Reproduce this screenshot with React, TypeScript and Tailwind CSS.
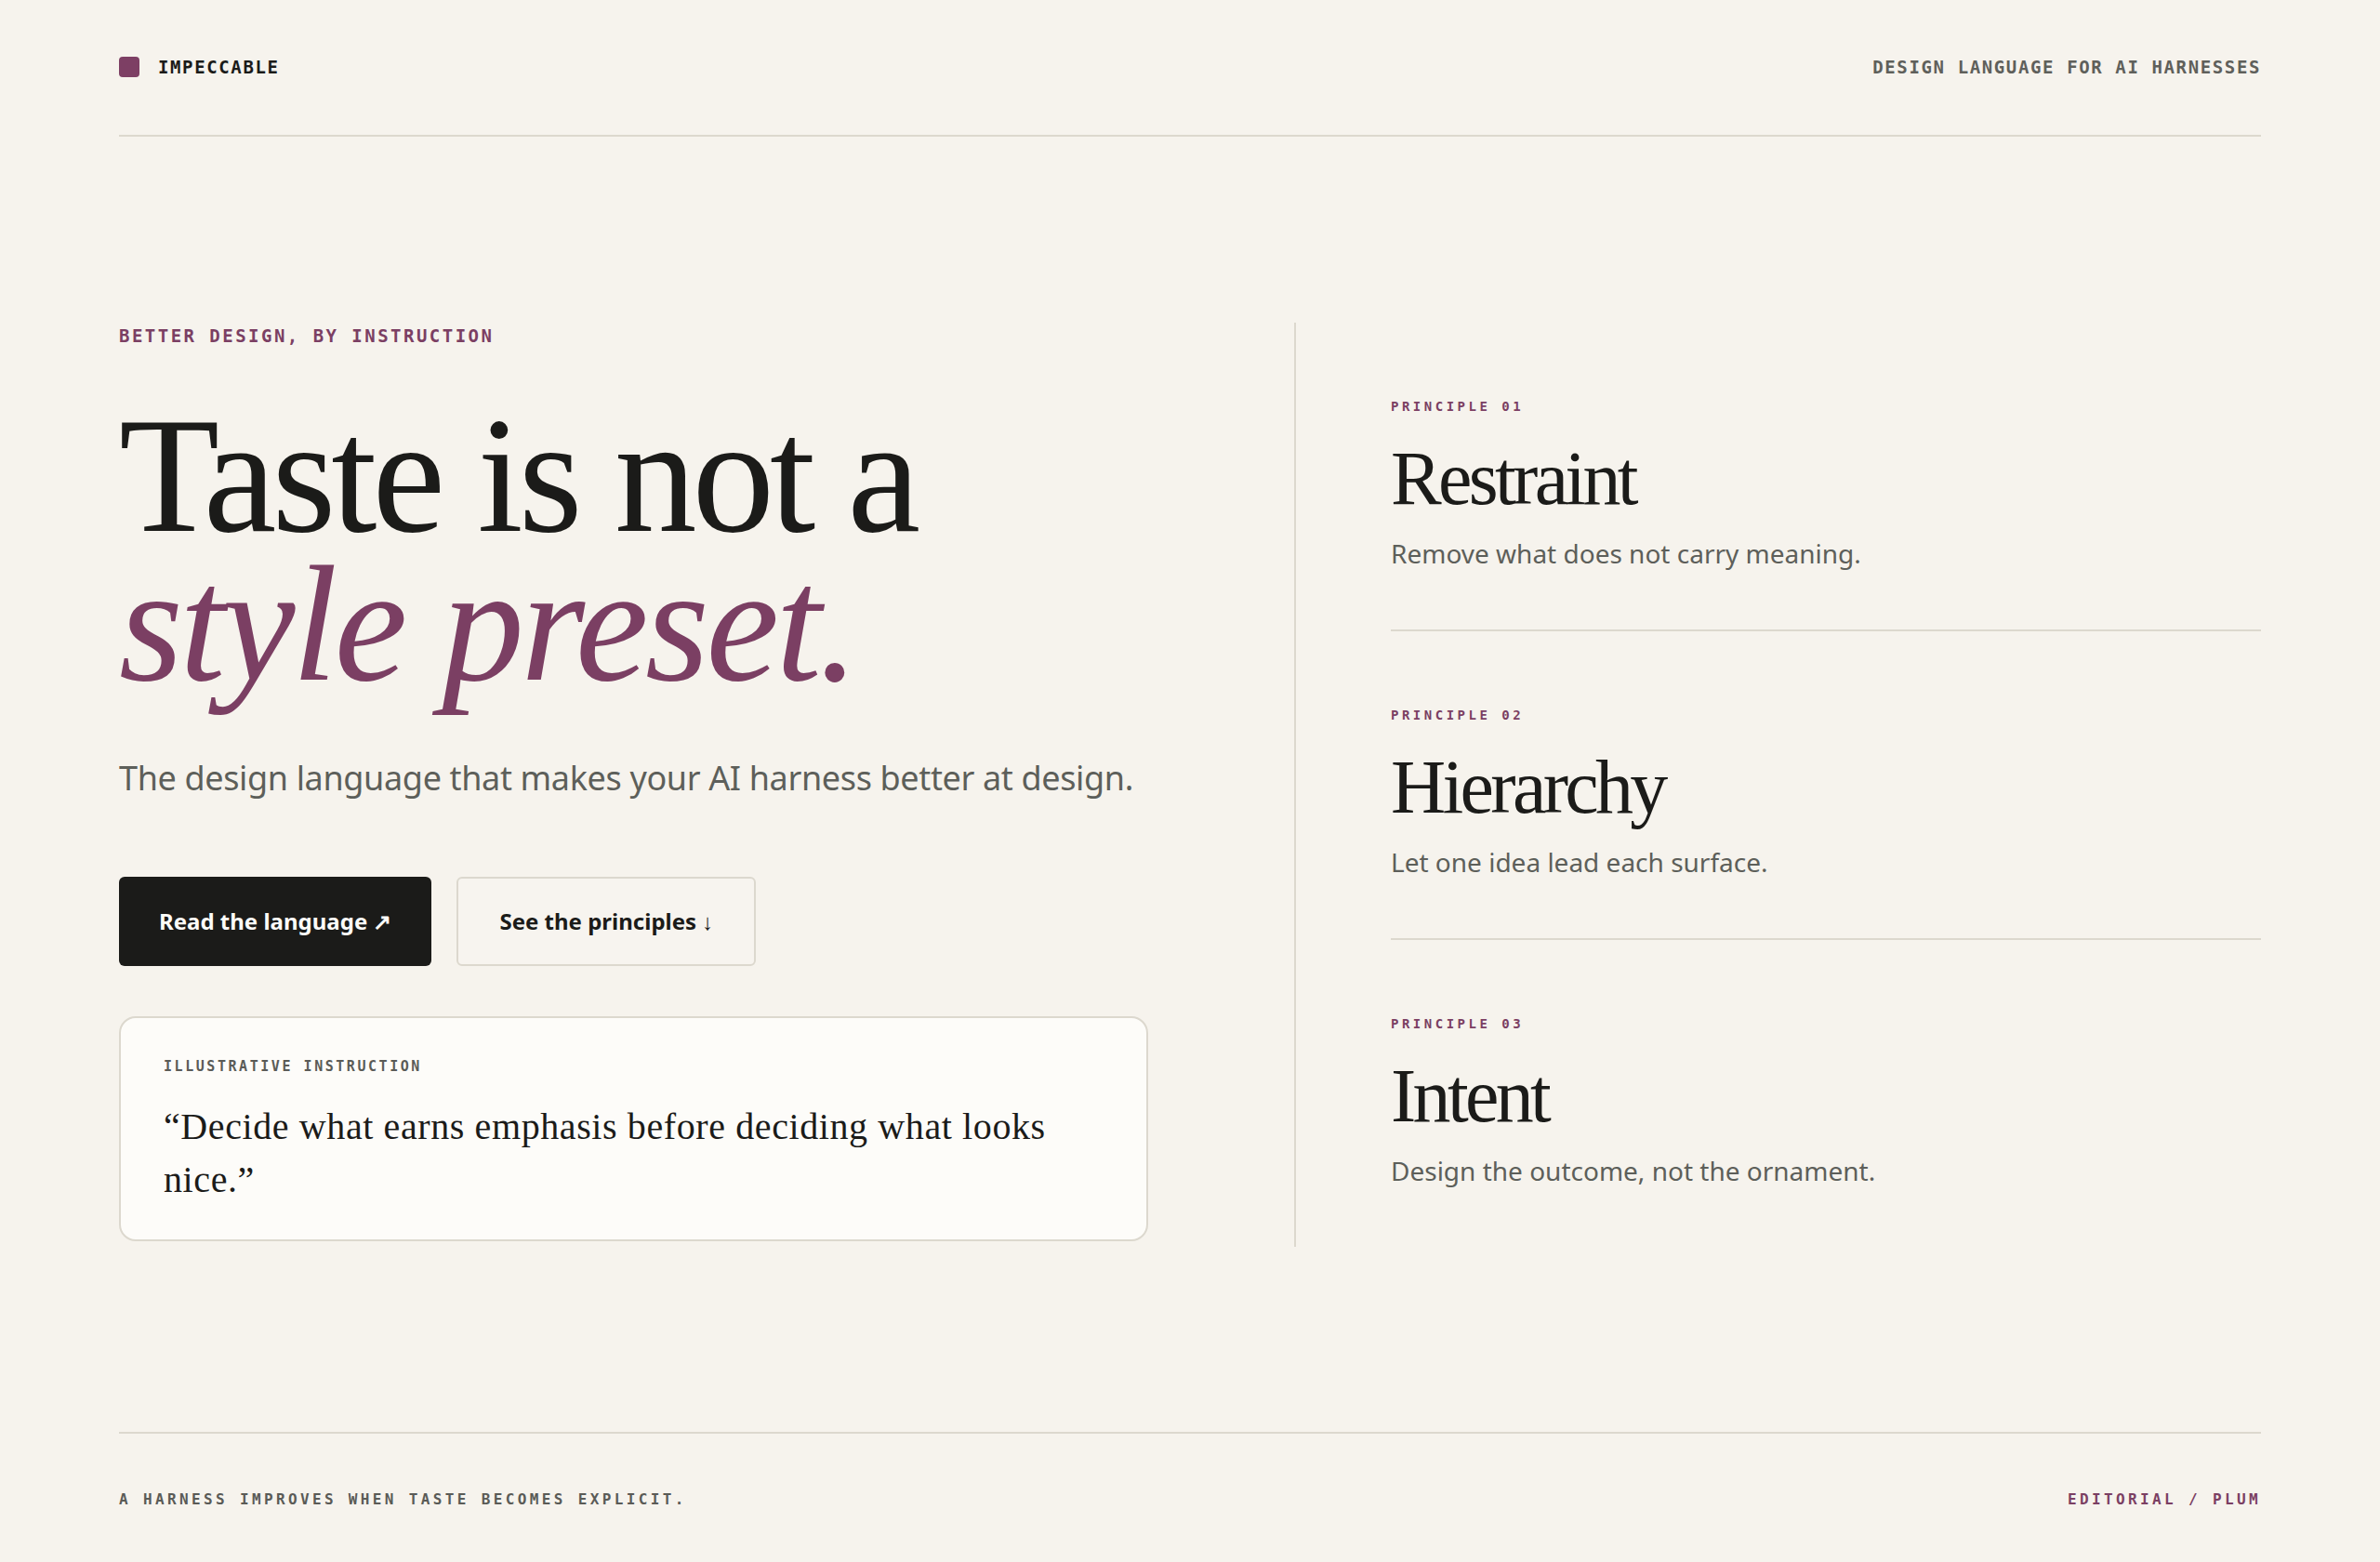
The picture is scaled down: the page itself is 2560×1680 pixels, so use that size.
const principles = [
  { n: '01', title: 'Restraint', desc: 'Remove what does not carry meaning.' },
  { n: '02', title: 'Hierarchy', desc: 'Let one idea lead each surface.' },
  { n: '03', title: 'Intent', desc: 'Design the outcome, not the ornament.' },
]

const mono = "font-['DejaVu_Sans_Mono',monospace]"
const serif = "font-['Liberation_Serif',serif]"

export default function App() {
  return (
    <div className="min-h-screen flex flex-col bg-[#f6f3ed] text-[#1b1b19] px-32 font-['Noto_Sans',sans-serif]">
      {/* HEADER */}
      <header className="flex items-center justify-between pt-[60px] pb-[61px] border-b-2 border-[#dcd8ce]">
        <div className="flex items-center gap-5">
          <span className="block w-[22px] h-[22px] rounded-[4px] bg-[#7d3f64]" />
          <span className={`${mono} text-[19px] leading-6 font-bold tracking-[0.085em]`}>IMPECCABLE</span>
        </div>
        <span className={`${mono} text-[19px] leading-6 font-bold tracking-[0.085em] text-[#5f605b]`}>DESIGN LANGUAGE FOR AI HARNESSES</span>
      </header>

      {/* HERO */}
      <main className="flex-1 flex items-center">
        <div className="grid grid-cols-[1107px_1fr] gap-[157px] w-full">
          <div>
            <div className={`${mono} text-[19px] leading-[28px] font-bold tracking-[0.13em] text-[#7b3f63]`}>BETTER DESIGN, BY INSTRUCTION</div>
            <h1 className={`${serif} mt-[56px] text-[177px] leading-[160px] tracking-[-0.028em] font-normal`}>
              Taste is not a
              <em className="block italic tracking-[-0.02em] text-[#7b3f63]">style preset.</em>
            </h1>
            <p className="mt-[59px] text-[36px] leading-[54px] whitespace-nowrap text-[#5d5f5a] tracking-[-0.01em]">The design language that makes your AI harness better at design.</p>
            <div className="mt-[79px] flex gap-[27px]">
              <button className="h-[96px] px-[43px] rounded-[6px] bg-[#1b1b19] text-[#fdfcf8] text-[24px] font-bold">Read the language ↗</button>
              <button className="h-[96px] px-[44px] rounded-[6px] border-2 border-[#dcd8ce] bg-[#f7f4ef] text-[#1b1b19] text-[24px] font-bold">See the principles ↓</button>
            </div>
            <div className="mt-[54px] rounded-[18px] border-2 border-[#dcd8ce] bg-[#fdfcf9] px-[46px] pt-[42px] pb-[36px]">
              <div className={`${mono} text-[15px] leading-5 font-bold tracking-[0.17em] text-[#5a5b57]`}>ILLUSTRATIVE INSTRUCTION</div>
              <p className={`${serif} mt-[26px] max-w-[1000px] text-[40px] leading-[57px] tracking-[0.015em]`}>&ldquo;Decide what earns emphasis before deciding what looks nice.&rdquo;</p>
            </div>
          </div>

          <div className="border-l-2 border-[#dcd8ce] pl-[102px]">
            {principles.map((p, i) => (
              <div key={p.n} className={`pt-[81px] pb-[62px] ${i < principles.length - 1 ? 'border-b-2 border-[#dcd8ce]' : ''}`}>
                <div className={`${mono} text-[14px] leading-[18px] font-bold tracking-[0.25em] text-[#7b3f63]`}>PRINCIPLE {p.n}</div>
                <h2 className={`${serif} mt-[27px] text-[82px] leading-[84px] tracking-[-0.045em] font-normal`}>{p.title}</h2>
                <p className="mt-[18px] text-[28px] leading-[40px] text-[#5d5f5a]">{p.desc}</p>
              </div>
            ))}
          </div>
        </div>
      </main>

      {/* FOOTER */}
      <footer className={`${mono} flex items-center justify-between border-t-2 border-[#dcd8ce] pt-[61px] pb-[57px] text-[16px] leading-5 font-bold tracking-[0.21em]`}>
        <span className="text-[#5a5b57]">A HARNESS IMPROVES WHEN TASTE BECOMES EXPLICIT.</span>
        <span className="text-[#7b3f63]">EDITORIAL / PLUM</span>
      </footer>
    </div>
  )
}
